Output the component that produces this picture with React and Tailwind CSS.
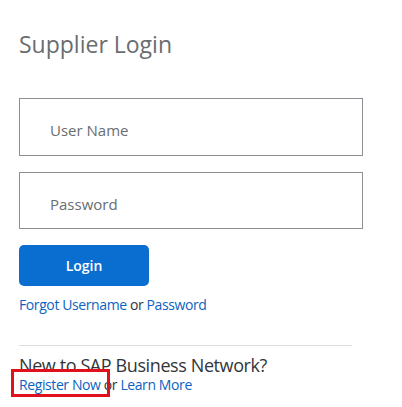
export default function App() {
  const font = { fontFamily: '"Open Sans", "Noto Sans", sans-serif' };

  return (
    <section className="relative min-h-screen w-[402px] bg-white pl-[19px] pt-[30px]" style={font}>
      <h1 className="text-[23px] leading-[28px] text-[#6a6d70]">Supplier Login</h1>

      <form className="mt-[40px] flex flex-col">
        <input
          type="text"
          placeholder="User Name"
          className="h-[58px] w-[344px] border border-[#8b8f94] bg-white pl-[30px] pt-[5px] text-[15px] text-[#32363a] outline-none placeholder:text-[#6a6d70]"
        />
        <input
          type="password"
          placeholder="Password"
          className="mt-4 h-[57px] w-[344px] border border-[#8b8f94] bg-white pl-[30px] pt-[7px] text-[15px] text-[#32363a] outline-none placeholder:text-[#6a6d70]"
        />
        <button
          type="button"
          className="mt-4 h-[41px] w-[130px] rounded-[5px] bg-[#0a6ed1] text-[14px] font-semibold text-white"
        >
          Login
        </button>
      </form>

      <p className="mt-[9px] text-[14px] leading-[20px] tracking-[-0.4px] text-[#32363a]">
        <a href="#" className="text-[#0b63c1]">Forgot Username</a> or{" "}
        <a href="#" className="text-[#0b63c1]">Password</a>
      </p>

      <div className="mt-[30px] h-px w-[333px] bg-[#dcdcdc]" />

      <h2 className="mt-[8px] text-[18px] leading-[22px] tracking-[-0.4px] text-[#32363a]">
        New to SAP Business Network?
      </h2>
      <p className="text-[14px] leading-[18px] tracking-[-0.4px] text-[#32363a]">
        <a href="#" className="text-[#0b63c1]">Register Now</a> or{" "}
        <a href="#" className="text-[#0b63c1]">Learn More</a>
      </p>

      <div className="absolute left-[11px] top-[369px] h-[28px] w-[99px] border-[3px] border-[#e0101c]" />
    </section>
  );
}
